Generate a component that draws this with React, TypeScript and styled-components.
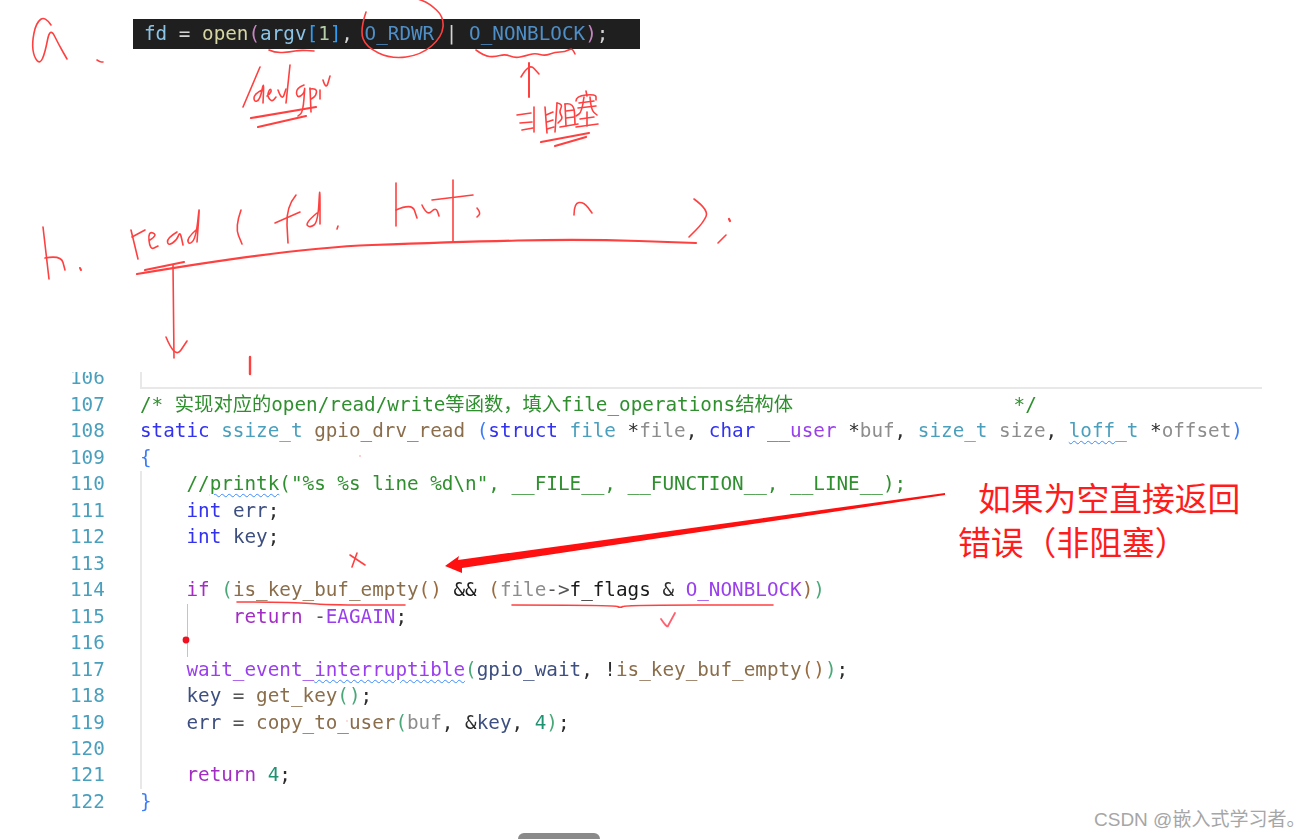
import styled, { createGlobalStyle } from 'styled-components';

type TokenKind =
  | 'kw' | 'type' | 'fn' | 'param' | 'paren' | 'purple' | 'ret' | 'green'
  | 'comment' | 'dark' | 'black' | 'varname' | 'brown' | 'num' | 'op';

type Tok = [string, TokenKind, boolean?];

interface ILine {
  no: number;
  toks: Tok[];
  guide?: boolean;
  inner?: boolean;
}

interface IStroke {
  pts: number[][];
  w?: number;
  c?: string;
}

const colors: Record<TokenKind, string> = {
  kw: '#3232f0',
  type: '#4a9fbd',
  fn: '#8a6d4b',
  param: '#8d8d8d',
  paren: '#3d7cf5',
  purple: '#9a3fec',
  ret: '#a32cc4',
  green: '#4aa878',
  comment: '#2f8f2f',
  dark: '#2c2c2c',
  black: '#1a1a1a',
  varname: '#3d4f80',
  brown: '#9a6b3f',
  num: '#1f9272',
  op: '#555555',
};

const darkColors: Record<string, string> = {
  v: '#8cc4e6',
  o: '#d4d4d4',
  f: '#d6d6a4',
  p: '#c586c0',
  b: '#2a9df4',
  n: '#b5cea8',
  c: '#4f8fc8',
};

const lines: ILine[] = [
  { no: 106, toks: [] },
  {
    no: 107,
    toks: [['/* 实现对应的open/read/write等函数，填入file_operations结构体                   */', 'comment']],
  },
  {
    no: 108,
    toks: [
      ['static', 'kw'], [' ', 'op'], ['ssize_t', 'type'], [' ', 'op'], ['gpio_drv_read', 'fn'], [' ', 'op'],
      ['(', 'paren'], ['struct', 'kw'], [' ', 'op'], ['file', 'type'], [' ', 'op'], ['*', 'dark'], ['file', 'param'],
      [', ', 'dark'], ['char', 'kw'], [' ', 'op'], ['__user', 'purple'], [' ', 'op'], ['*', 'dark'], ['buf', 'param'],
      [', ', 'dark'], ['size_t', 'type'], [' ', 'op'], ['size', 'param'], [', ', 'dark'], ['loff', 'type', true],
      ['_t', 'type'], [' ', 'op'], ['*', 'dark'], ['offset', 'param'], [')', 'paren'],
    ],
  },
  { no: 109, toks: [['{', 'paren']] },
  {
    no: 110,
    guide: true,
    toks: [
      ['    //', 'comment'], ['printk', 'comment', true],
      ['("%s %s line %d\\n", __FILE__, __FUNCTION__, __LINE__);', 'comment'],
    ],
  },
  { no: 111, guide: true, toks: [['    ', 'op'], ['int', 'kw'], [' ', 'op'], ['err', 'varname'], [';', 'dark']] },
  { no: 112, guide: true, toks: [['    ', 'op'], ['int', 'kw'], [' ', 'op'], ['key', 'varname'], [';', 'dark']] },
  { no: 113, guide: true, toks: [] },
  {
    no: 114,
    guide: true,
    toks: [
      ['    ', 'op'], ['if', 'ret'], [' ', 'op'], ['(', 'green'], ['is_key_buf_empty', 'fn'], ['()', 'brown'],
      [' && ', 'black'], ['(', 'brown'], ['file', 'param'], ['->', 'op'], ['f_flags', 'black'], [' & ', 'dark'],
      ['O_NONBLOCK', 'purple'], [')', 'brown'], [')', 'green'],
    ],
  },
  {
    no: 115,
    guide: true,
    inner: true,
    toks: [['        ', 'op'], ['return', 'ret'], [' -', 'op'], ['EAGAIN', 'purple'], [';', 'dark']],
  },
  { no: 116, guide: true, inner: true, toks: [] },
  {
    no: 117,
    guide: true,
    toks: [
      ['    ', 'op'], ['wait_event_', 'purple'], ['interruptible', 'purple', true], ['(', 'green'],
      ['gpio_wait', 'varname'], [', !', 'dark'], ['is_key_buf_empty', 'fn'], ['()', 'brown'], [')', 'green'], [';', 'dark'],
    ],
  },
  {
    no: 118,
    guide: true,
    toks: [
      ['    ', 'op'], ['key', 'varname'], [' = ', 'op'], ['get_key', 'fn'], ['(', 'green'], [')', 'green'], [';', 'dark'],
    ],
  },
  {
    no: 119,
    guide: true,
    toks: [
      ['    ', 'op'], ['err', 'varname'], [' = ', 'op'], ['copy_to_user', 'fn'], ['(', 'green'], ['buf', 'param'],
      [', &', 'dark'], ['key', 'varname'], [', ', 'dark'], ['4', 'num'], [')', 'green'], [';', 'dark'],
    ],
  },
  { no: 120, guide: true, toks: [] },
  { no: 121, guide: true, toks: [['    ', 'op'], ['return', 'ret'], [' ', 'op'], ['4', 'num'], [';', 'dark']] },
  { no: 122, toks: [['}', 'paren']] },
];

// pen annotations, in page pixels
const strokes: IStroke[] = [
  // a.
  { pts: [[51, 25], [45, 16], [36, 23], [32, 43], [34, 57], [40, 64], [45, 53], [50, 27], [59, 45], [67, 59]] },
  { pts: [[97, 60], [100, 62], [103, 62]] },
  // circle round O_RDWR
  { pts: [[366, 12], [360, 30], [366, 47], [391, 59], [421, 55], [442, 37], [444, 17], [429, 3], [415, -2]] },
  // under argv
  { pts: [[269, 50], [275, 53], [290, 52], [300, 50], [314, 51]] },
  // dev gpio note
  { pts: [[260, 67], [243, 107]] },
  { pts: [[262, 90], [254, 94], [254, 102], [260, 100], [264, 80], [263, 103]] },
  { pts: [[267, 96], [272, 92], [270, 88], [267, 96], [272, 102], [276, 97]] },
  { pts: [[278, 90], [282, 101], [286, 89]] },
  { pts: [[290, 65], [286, 103]] },
  { pts: [[304, 85], [296, 88], [297, 98], [304, 94], [305, 85], [303, 112], [298, 116]] },
  { pts: [[310, 88], [311, 112]] },
  { pts: [[310, 89], [317, 88], [316, 96], [311, 99]] },
  { pts: [[320, 90], [320, 99]] },
  { pts: [[323, 80], [326, 90], [330, 76]] },
  { pts: [[251, 118], [316, 107]], w: 2.2 },
  { pts: [[258, 127], [306, 116]], w: 2.2 },
  // squiggle and arrow at O_NONBLOCK
  { pts: [[476, 50], [484, 56], [495, 57], [505, 54], [515, 58], [525, 56], [535, 53], [545, 56], [555, 52], [565, 52], [572, 48], [575, 54]] },
  { pts: [[529, 97], [529, 63]], w: 2 },
  { pts: [[521, 77], [529, 63], [539, 74]], w: 1.6 },
  // non-blocking note
  { pts: [[517, 115], [531, 113]] },
  { pts: [[520, 123], [532, 122]] },
  { pts: [[522, 130], [533, 128]] },
  { pts: [[534, 107], [534, 132]] },
  { pts: [[545, 107], [547, 133]] },
  { pts: [[546, 115], [553, 112]] },
  { pts: [[547, 122], [553, 120]] },
  { pts: [[547, 129], [554, 127]] },
  { pts: [[557, 103], [555, 132]] },
  { pts: [[557, 103], [563, 104], [559, 112], [563, 118], [558, 123]] },
  { pts: [[565, 104], [566, 126]] },
  { pts: [[565, 104], [574, 102], [575, 124]] },
  { pts: [[566, 111], [574, 110]] },
  { pts: [[566, 118], [574, 117]] },
  { pts: [[560, 127], [578, 124]] },
  { pts: [[586, 91], [587, 96]] },
  { pts: [[576, 101], [576, 96], [596, 94], [596, 100]] },
  { pts: [[579, 103], [594, 101]] },
  { pts: [[578, 108], [596, 106]] },
  { pts: [[584, 97], [582, 112], [576, 116]] },
  { pts: [[590, 97], [591, 110], [597, 115]] },
  { pts: [[587, 112], [587, 126]] },
  { pts: [[580, 119], [594, 117]] },
  { pts: [[576, 127], [598, 124]] },
  { pts: [[541, 142], [589, 133]], w: 2.2 },
  { pts: [[555, 146], [586, 137]], w: 2.2 },
  // b. read ( fd, buf, n );
  { pts: [[43, 227], [49, 279]] },
  { pts: [[45, 258], [61, 255], [65, 270]] },
  { pts: [[80, 268], [81, 270]], w: 2 },
  { pts: [[131, 230], [138, 259]] },
  { pts: [[132, 237], [145, 230]] },
  { pts: [[150, 240], [158, 235], [148, 231], [150, 250], [158, 246]] },
  { pts: [[177, 232], [167, 238], [168, 246], [177, 240], [180, 231], [183, 245]] },
  { pts: [[196, 230], [187, 238], [189, 245], [196, 238], [200, 200], [197, 242]] },
  { pts: [[241, 210], [235, 227], [242, 244]] },
  { pts: [[296, 195], [286, 207], [288, 243]] },
  { pts: [[275, 223], [300, 212]] },
  { pts: [[317, 213], [305, 223], [310, 228], [318, 222], [320, 182], [320, 224]] },
  { pts: [[338, 226], [337, 229]] },
  { pts: [[396, 183], [396, 226]] },
  { pts: [[396, 210], [412, 203], [417, 218]] },
  { pts: [[422, 205], [427, 216], [436, 207], [439, 216]] },
  { pts: [[453, 180], [453, 242]] },
  { pts: [[432, 200], [473, 195]] },
  { pts: [[477, 208], [481, 213], [477, 217]] },
  { pts: [[574, 215], [574, 203], [584, 202], [592, 213]] },
  { pts: [[694, 199], [709, 210], [703, 223], [689, 237]] },
  { pts: [[729, 219], [730, 221]], w: 2.2 },
  { pts: [[726, 235], [718, 243]] },
  // long line and arrow below read
  { pts: [[137, 274], [291, 248], [453, 242], [582, 239], [696, 243]], w: 2.2 },
  { pts: [[145, 270], [184, 262]], w: 2.2 },
  { pts: [[173, 265], [174, 358]] },
  { pts: [[166, 337], [175, 359], [187, 341]] },
  { pts: [[250, 357], [250, 374]], w: 2.4 },
  // x and tick beside line 114
  { pts: [[350, 555], [365, 565]] },
  { pts: [[357, 553], [352, 567]] },
  { pts: [[237, 602], [293, 602], [327, 605], [405, 605]] },
  { pts: [[512, 605], [615, 605], [620, 608], [626, 605], [773, 605]] },
  { pts: [[661, 619], [667, 628], [669, 624], [675, 613]], c: '#ff6070', w: 1.8 },
];

const smooth = (pts: number[][]) => {
  let d = `M${pts[0][0]} ${pts[0][1]}`;
  for (let i = 1; i < pts.length - 1; i++) {
    const mx = (pts[i][0] + pts[i + 1][0]) / 2;
    const my = (pts[i][1] + pts[i + 1][1]) / 2;
    d += ` Q${pts[i][0]} ${pts[i][1]} ${mx} ${my}`;
  }
  const last = pts[pts.length - 1];
  return `${d} L${last[0]} ${last[1]}`;
};

const GlobalStyle = createGlobalStyle`
  html, body {
    margin: 0;
    padding: 0;
    background: #ffffff;
  }
`;

const Page = styled.div`
  position: relative;
  width: 1308px;
  height: 839px;
  overflow: hidden;
  background: #ffffff;
  padding-top: 19px;
  box-sizing: border-box;
`;

const mono = `"DejaVu Sans Mono", "Noto Sans CJK SC", monospace`;

const DarkStrip = styled.pre`
  margin: 0 0 0 133px;
  width: 507px;
  height: 30px;
  box-sizing: border-box;
  padding-left: 11px;
  background: #1f1f1f;
  font-family: ${mono};
  font-size: 19.3px;
  line-height: 29px;
  filter: blur(0.5px);
`;

const DarkTok = styled.span<{ $c: string }>`
  color: ${props => darkColors[props.$c]};
`;

const CodeViewport = styled.div`
  margin: 323px 0 0 70px;
  height: 460px;
  overflow: hidden;
  font-family: ${mono};
  font-size: 19.3px;
  filter: blur(0.4px);
`;

const CodeInner = styled.div`
  margin-top: -6.6px;
`;

const Row = styled.div`
  display: flex;
  height: 26.47px;
  line-height: 26.47px;
`;

const LineNo = styled.div`
  width: 70px;
  flex: none;
  color: #4a9fbd;
`;

const CodeCell = styled.pre<{ $guide?: boolean; $inner?: boolean; $boxed?: boolean }>`
  position: relative;
  margin: 0;
  width: 1122px;
  height: ${props => (props.$boxed ? '24px' : '26.47px')};
  font: inherit;
  line-height: 26.47px;
  box-shadow: ${props =>
    props.$boxed
      ? 'inset 2px 0 0 #e8e8e8, inset 0 -2px 0 #e8e8e8'
      : props.$guide
        ? 'inset 2px 0 0 #e8e8e8'
        : 'none'};

  &::before {
    content: '';
    display: ${props => (props.$inner ? 'block' : 'none')};
    position: absolute;
    left: 47px;
    top: 0;
    bottom: 0;
    width: 1px;
    background: #c4c4c4;
  }
`;

const Token = styled.span<{ $kind: TokenKind; $wavy?: boolean }>`
  color: ${props => colors[props.$kind]};
  text-decoration: ${props => (props.$wavy ? 'underline wavy #3b8bff 1px' : 'none')};
  text-underline-offset: 3px;
`;

const InkLayer = styled.svg`
  position: absolute;
  left: 0;
  top: 0;
  pointer-events: none;
  filter: blur(0.35px);
`;

const Note = styled.div`
  position: absolute;
  left: 958px;
  top: 475px;
  font-family: "Noto Sans CJK SC", sans-serif;
  font-weight: 400;
  font-size: 32.8px;
  line-height: 44px;
  color: #ff1c1c;
  white-space: nowrap;
`;

const NoteLine = styled.div<{ $indent?: number }>`
  padding-left: ${props => props.$indent || 0}px;
`;

const Watermark = styled.div`
  position: absolute;
  left: 1094px;
  top: 807px;
  font-family: "Liberation Sans", "Noto Sans CJK SC", sans-serif;
  font-size: 19px;
  line-height: 26px;
  color: #a6a6a6;
  white-space: nowrap;
`;

const ScrollPill = styled.div`
  position: absolute;
  left: 518px;
  bottom: 0;
  width: 82px;
  height: 6px;
  border-radius: 6px 6px 0 0;
  background: #8a8a8a;
`;

const darkToks: [string, string][] = [
  ['fd', 'v'], [' = ', 'o'], ['open', 'f'], ['(', 'p'], ['argv', 'v'], ['[', 'b'], ['1', 'n'], [']', 'b'], [', ', 'o'],
  ['O_RDWR', 'c'], [' | ', 'o'], ['O_NONBLOCK', 'c'], [')', 'p'], [';', 'o'],
];

export default function App() {
  return (
    <Page>
      <GlobalStyle />
      <DarkStrip>
        {darkToks.map(([text, c], i) => (
          <DarkTok key={i} $c={c}>{text}</DarkTok>
        ))}
      </DarkStrip>
      <CodeViewport>
        <CodeInner>
          {lines.map((line: ILine) => (
            <Row key={line.no}>
              <LineNo>{line.no}</LineNo>
              <CodeCell $guide={line.guide} $inner={line.inner} $boxed={line.no === 106}>
                {line.toks.map(([text, kind, wavy], i) => (
                  <Token key={i} $kind={kind} $wavy={wavy}>{text}</Token>
                ))}
              </CodeCell>
            </Row>
          ))}
        </CodeInner>
      </CodeViewport>
      <InkLayer width={1308} height={839} viewBox="0 0 1308 839" fill="none">
        {strokes.map((s, i) => (
          <path
            key={i}
            d={smooth(s.pts)}
            stroke={s.c || '#ff4040'}
            strokeWidth={s.w || 1.6}
            strokeLinecap="round"
            strokeLinejoin="round"
          />
        ))}
        {/* thick arrow pointing at line 114 */}
        <polygon points="445,566 459,556 458,560 945,493 945,495 462,568 462,573" fill="#ff1010" />
        <circle cx={186} cy={640} r={3.4} fill="#f01020" />
        <circle cx={360} cy={456} r={0.8} fill="#ff9090" />
        <circle cx={347} cy={721} r={0.8} fill="#ffb0b0" />
      </InkLayer>
      <Note>
        <NoteLine $indent={20}>如果为空直接返回</NoteLine>
        <NoteLine>错误（非阻塞）</NoteLine>
      </Note>
      <Watermark>CSDN @嵌入式学习者。</Watermark>
      <ScrollPill />
    </Page>
  );
}
